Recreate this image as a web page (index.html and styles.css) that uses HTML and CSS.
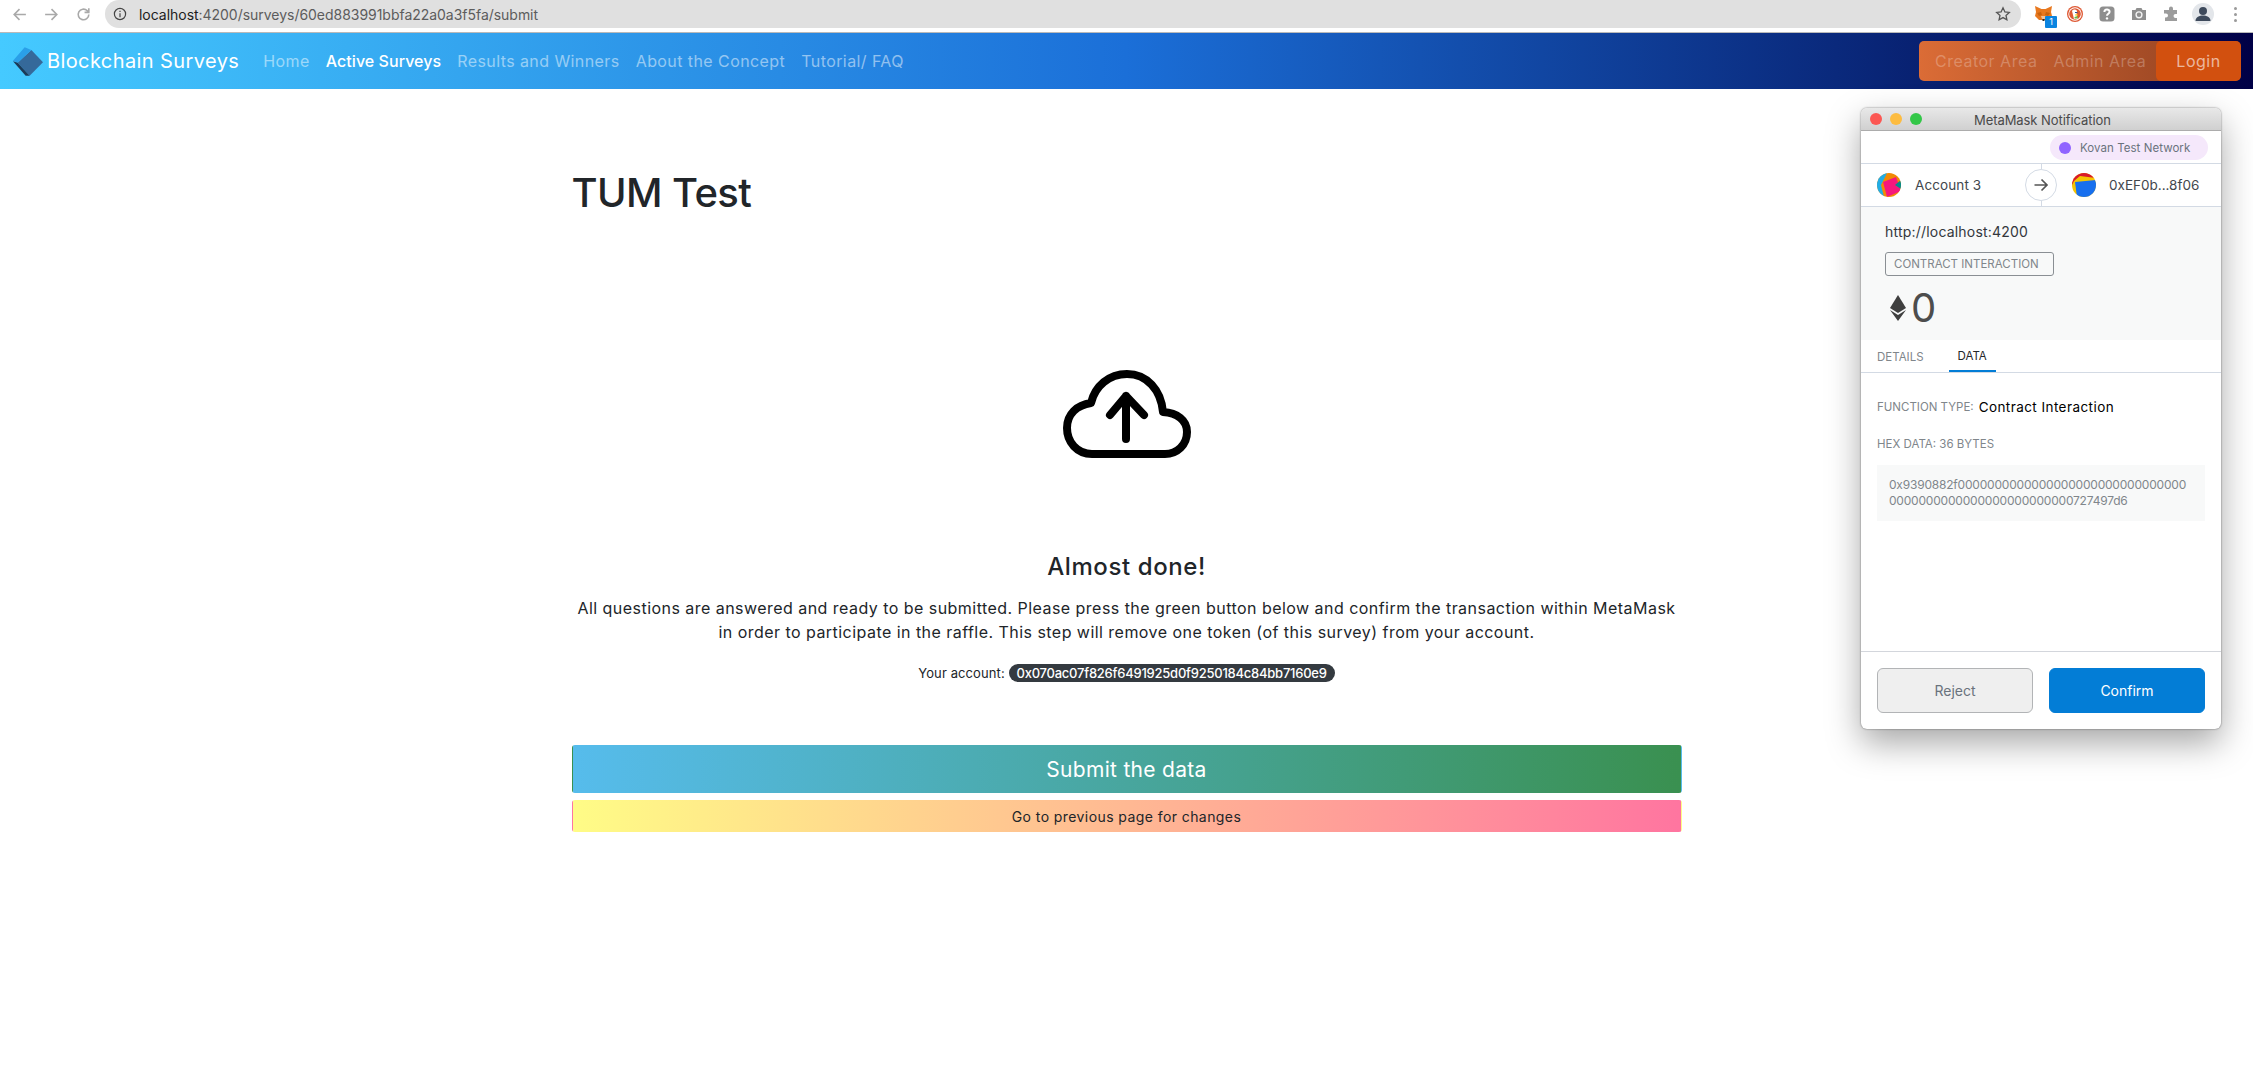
FILE: index.html
```html
<!DOCTYPE html>
<html lang="en">
<head>
<meta charset="UTF-8">
<title>Blockchain Surveys</title>
<link rel="stylesheet" href="styles.css">
</head>
<body>

<div class="browser">
  <div class="browser-nav">
    <svg class="b-ico" viewBox="0 0 16 16"><path d="M14 8H3M8 3 3 8l5 5"/></svg>
    <svg class="b-ico" viewBox="0 0 16 16"><path d="M2 8h11M8 3l5 5-5 5"/></svg>
    <svg class="b-ico" viewBox="0 0 16 16"><path d="M13 8a5 5 0 1 1-1.6-3.7L13 6M13 2v4H9"/></svg>
  </div>
  <div class="address">
    <svg class="info" viewBox="0 0 14 14"><circle cx="7" cy="7" r="5.6"/><path d="M7 6.2v4M7 3.8v1.2"/></svg>
    <span class="url"><b>localhost</b>:4200/surveys/60ed883991bbfa22a0a3f5fa/submit</span>
    <svg class="star" viewBox="0 0 16 16"><path d="M8 1.8l1.9 4.1 4.4.5-3.3 3 .9 4.4L8 11.6l-3.9 2.2.9-4.4-3.3-3 4.4-.5z"/></svg>
  </div>
  <div class="ext">
    <span class="fox-wrap">
      <svg class="fox" viewBox="0 0 17 15"><path fill="#e8781f" d="M0 0l6.500 3h4L17 0l-1 6 1 4-4 4H4l-4-4 1-4z"/><path fill="#c9620f" d="M2 7l4-1 1 3-3 1zM15 7l-4-1-1 3 3 1z"/><path fill="#f4c39a" d="M6 10h5l-1 3H7z"/><path fill="#2b2b2b" d="M7.500 13h2v2h-2z"/></svg>
      <span class="fox-badge">1</span>
    </span>
    <svg class="ext-ico" viewBox="0 0 16 16"><circle cx="8" cy="8" r="8" fill="#de5833"/><circle cx="8" cy="8" r="6.700" fill="#fff"/><circle cx="8" cy="8" r="5.800" fill="#de5833"/><path fill="#fff" d="M5 5c1-2 4-2 5 0l-.5 3 1 5H7z"/><path fill="#2d4f8e" d="M8 6h2.500v1H8z"/><path fill="#fdd20a" d="M8 8.500h3v1H8z"/><path fill="#65bc46" d="M7.500 11l3-1v2.500h-3z"/></svg>
    <svg class="ext-ico" viewBox="0 0 16 16"><rect x="0.5" y="0.5" width="15" height="15" rx="3.5" fill="#8f8f8f"/><path d="M5.400 6c0-3.200 5.200-3.200 5.200-.2 0 2-2.600 2-2.600 4" fill="none" stroke="#fff" stroke-width="2"/><circle cx="8" cy="12.400" r="1.200" fill="#fff"/></svg>
    <svg class="ext-ico" viewBox="0 0 16 16"><path fill="#8f8f8f" d="M1 4h3.500l1-2h5l1 2H15v10H1z"/><circle cx="8" cy="8.800" r="3.600" fill="#f4f4f4"/><circle cx="8" cy="8.800" r="2.200" fill="#8f8f8f"/></svg>
    <svg class="ext-ico" viewBox="0 0 16 16"><path fill="#9c9c9c" d="M6 2.500a2 2 0 0 1 4 0V4h4v4h-1.500a2 2 0 0 0 0 4H14v3H2v-3.500h1a2 2 0 0 0 0-4H1V4h5z"/></svg>
    <span class="avatar"><svg viewBox="0 0 22 22"><circle cx="11" cy="8" r="4" fill="#3e4a5c"/><path d="M3.500 18c0-4 4-5.500 7.500-5.500s7.500 1.500 7.500 5.500z" fill="#3e4a5c"/></svg></span>
    <span class="kebab"><i></i><i></i><i></i></span>
  </div>
</div>

<nav class="navbar">
  <a class="brand" href="#">
    <svg class="logo" viewBox="0 0 90 85"><path fill="#35699a" d="M55 8 90 45 50 85 14 46z"/><path fill="#2a9fe8" d="M0 40 35 0l20 8-41 38z"/><path fill="#1c3a58" d="M0 42l14 4 36 39H38z"/></svg>
    Blockchain Surveys
  </a>
  <ul class="nav-links">
    <li><a href="#">Home</a></li>
    <li class="active"><a href="#">Active Surveys</a></li>
    <li><a href="#">Results and Winners</a></li>
    <li><a href="#">About the Concept</a></li>
    <li><a href="#">Tutorial/ FAQ</a></li>
  </ul>
  <div class="user-area">
    <a href="#">Creator Area</a>
    <a href="#">Admin Area</a>
    <a class="login" href="#">Login</a>
  </div>
</nav>

<main class="container">
  <h1>TUM Test</h1>
  <svg class="cloud" viewBox="0 0 128 88"><path d="M29 84C14 84 4 72 4 58c0-14 10-23 24-25C32 16 46 4 64 4c20 0 34 16 36 38 14 1 24 8 24 20 0 13-10 22-22 22z"/><path d="M63 69V26M47 45l16-19 18 19"/></svg>
  <h2>Almost done!</h2>
  <p class="lead">All questions are answered and ready to be submitted. Please press the green button below and confirm the transaction within MetaMask<br>in order to participate in the raffle. This step will remove one token (of this survey) from your account.</p>
  <p class="account">Your account: <span class="pill">0x070ac07f826f6491925d0f9250184c84bb7160e9</span></p>
  <button class="btn-submit">Submit the data</button>
  <button class="btn-back">Go to previous page for changes</button>
</main>

<section class="mm-window">
  <header class="mm-title">
    <span class="dot red"></span><span class="dot yellow"></span><span class="dot green"></span>
    <span class="mm-title-text">MetaMask Notification</span>
  </header>
  <div class="mm-network">
    <span class="net-pill"><i></i>Kovan Test Network</span>
  </div>
  <div class="mm-accounts">
    <svg class="identicon" viewBox="0 0 24 24"><defs><clipPath id="c1"><circle cx="12" cy="12" r="12"/></clipPath></defs><g clip-path="url(#c1)"><rect width="24" height="24" fill="#f18a05"/><path fill="#22ade5" d="M0 0h10L4 12l3 12H0z"/><path fill="#f5187d" d="M6 9 19 4l5 14-14 6z"/><path fill="#038c8c" d="M18 12l6-5v9z"/></g></svg>
    <span class="acc-name">Account 3</span>
    <span class="arrow-wrap"><svg viewBox="0 0 16 16"><path d="M1.500 8h12M8.500 2.500 14 8l-5.500 5.500"/></svg></span>
    <svg class="identicon second" viewBox="0 0 24 24"><defs><clipPath id="c2"><circle cx="12" cy="12" r="12"/></clipPath></defs><g clip-path="url(#c2)"><rect width="24" height="24" fill="#f5c402"/><path fill="#d81a2b" d="M0 0h24v5L8 3 2 8 0 12z"/><path fill="#176fee" d="M3 9 24 7v17H5z"/></g></svg>
    <span class="acc-name addr">0xEF0b...8f06</span>
  </div>
  <div class="mm-summary">
    <div class="origin">http://localhost:4200</div>
    <span class="action-tag">CONTRACT INTERACTION</span>
    <div class="amount">
      <svg viewBox="0 0 16 26"><path fill="#3f3f3f" d="M8 0 16 13 8 18 0 13z"/><path fill="#3f3f3f" d="M0 15l8 5 8-5-8 11z"/></svg>
      <span>0</span>
    </div>
  </div>
  <div class="mm-tabs">
    <span class="tab">DETAILS</span>
    <span class="tab selected">DATA</span>
  </div>
  <div class="mm-data">
    <div class="fn-row"><span class="label">FUNCTION TYPE:</span><span class="fn-value">Contract Interaction</span></div>
    <div class="label hex-label">HEX DATA: 36 BYTES</div>
    <div class="hex-box">0x9390882f0000000000000000000000000000000<br>0000000000000000000000000727497d6</div>
  </div>
  <footer class="mm-footer">
    <button class="mm-btn reject">Reject</button>
    <button class="mm-btn confirm">Confirm</button>
  </footer>
</section>

</body>
</html>
```

FILE: styles.css
```css
*{box-sizing:border-box}
html,body{height:100%}
body{margin:0;font-family:Inter,"Noto Sans",sans-serif;background:#fff;color:#212529;overflow:hidden;position:relative}
a{text-decoration:none;color:inherit}

/* browser chrome */
.browser{height:33px;display:flex;align-items:flex-start;background:#fff;border-bottom:1px solid #b9b9b9}
.browser-nav{width:105px;height:28px;padding-left:11px;display:flex;align-items:center;gap:15px;flex:none}
.b-ico{width:17px;height:17px;fill:none;stroke:#a9a9a9;stroke-width:1.5}
.address{width:1916px;height:28px;flex:none;background:#e0e0e0;border-radius:14px;display:flex;align-items:center;padding:0 10px 0 8px;font-size:14px;color:#5c5c5c}
.address b{font-weight:400;color:#1d1d1d}
.info{width:14px;height:14px;fill:none;stroke:#444;stroke-width:1.200;margin-right:12px;flex:none}
.url{flex:1;letter-spacing:-.03px}
.star{width:16px;height:16px;fill:none;stroke:#555;stroke-width:1.300}
.ext{flex:1;height:28px;display:flex;align-items:center;padding-left:14px;gap:16px}
.fox-wrap{position:relative;width:16px;height:16px;flex:none}
.fox{width:17px;height:15px;display:block}
.fox-badge{position:absolute;left:10px;top:10px;width:12px;height:12px;background:#0a84e0;color:#fff;font-size:9px;line-height:12px;text-align:center;border-radius:1px}
.ext-ico{width:16px;height:16px;flex:none}
.avatar{width:22px;height:22px;border-radius:50%;background:#e3e6ea;flex:none;margin-left:-3px}
.avatar svg{display:block;width:22px;height:22px}
.kebab{display:flex;flex-direction:column;gap:3px;margin-left:4px}
.kebab i{width:3px;height:3px;border-radius:50%;background:#9a9a9a}

/* app navbar */
.navbar{height:56px;display:flex;align-items:center;padding:0 12px 0 13px;background:linear-gradient(90deg,#45caff 0%,#1b6fd8 50%,#000046 100%)}
.brand{display:flex;align-items:center;gap:4px;font-size:20px;color:#fff;letter-spacing:.4px}
.logo{width:30px;height:29px;flex:none}
.nav-links{display:flex;gap:16px;list-style:none;margin:0 0 0 24px;padding:0;font-size:16px;letter-spacing:.42px;color:rgba(255,255,255,.5)}
.nav-links .active{color:#fff;font-weight:500;letter-spacing:.05px}
.user-area{margin-left:auto;height:40px;width:322px;display:flex;align-items:center;border-radius:5px;font-size:16px;letter-spacing:.5px;color:rgba(255,255,255,.26);background:linear-gradient(90deg,#db6c36,#8e3f20);overflow:hidden}
.user-area a{padding:0 8px}
.user-area a:first-child{padding-left:16px}
.user-area .login{margin-left:auto;height:40px;width:85px;display:flex;align-items:center;justify-content:center;background:#d2500f;color:rgba(255,255,255,.6);border-radius:5px}

/* page body */
.container{width:1110px;margin:0 auto;display:flex;flex-direction:column;align-items:center;text-align:center}
h1{align-self:flex-start;margin:80px 0 0;font-size:40px;line-height:48px;font-weight:500;letter-spacing:-.6px}
.cloud{display:block;width:128px;height:88px;margin-top:153px;fill:none;stroke:#000;stroke-width:8;stroke-linecap:round;stroke-linejoin:round}
h2{margin:94px 0 0;font-size:24px;line-height:29px;font-weight:500;letter-spacing:.6px}
.lead{margin:15px 0 0;font-size:16px;line-height:24px;letter-spacing:.46px;color:#212529}
.account{margin:20px 0 0;font-size:13px;line-height:18px;letter-spacing:.1px}
.pill{display:inline-block;padding:0 8px;border-radius:9px;background:#343a40;color:#fff;font-weight:500;letter-spacing:-.24px}
.btn-submit,.btn-back{display:block;width:100%;border:1px solid transparent;font-family:inherit;border-radius:3px}
.btn-submit{margin-top:63px;height:48px;font-size:21px;letter-spacing:.3px;color:#fff;background:linear-gradient(90deg,#56bcec,#3a9050)}
.btn-back{margin-top:7px;height:32px;font-size:14px;letter-spacing:.42px;color:#212529;background:linear-gradient(90deg,#fffc86,#ff75a0)}

/* floating metamask popup */
.mm-window{position:absolute;left:1861px;top:108px;width:360px;height:621px;background:#fff;border-radius:6px;display:flex;flex-direction:column;overflow:hidden;box-shadow:0 0 2px rgba(0,0,0,.55),0 14px 34px rgba(0,0,0,.35);color:#24272a}
.mm-title{height:23px;flex:none;display:flex;align-items:center;gap:8px;padding-left:9px;position:relative;background:linear-gradient(#e8e8e8,#d0d0d0);border-bottom:1px solid #acacac}
.dot{width:12px;height:12px;border-radius:50%}
.red{background:#fc5753}
.yellow{background:#fdbc40}
.green{background:#33c748}
.mm-title-text{position:absolute;left:113px;top:4px;font-size:13px;line-height:16px;color:#4a4a4a;letter-spacing:-.07px}
.mm-network{height:33px;flex:none;display:flex;align-items:center;justify-content:flex-end;padding:1px 13px 0 0;border-bottom:1px solid #d3dae4}
.net-pill{height:25px;width:158px;display:flex;align-items:center;gap:9px;padding-left:9px;border-radius:13px;background:#f5e8fb;font-size:11.500px;color:#6a737d;letter-spacing:.05px}
.net-pill i{width:12px;height:12px;border-radius:50%;background:#9064ff}
.mm-accounts{height:43px;flex:none;display:flex;align-items:center;padding-left:16px;border-bottom:1px solid #d3dae4}
.identicon{width:24px;height:24px;flex:none}
.identicon.second{margin-left:15px}
.acc-name{margin-left:14px;font-size:13.500px;letter-spacing:.1px;color:#42474d;width:110px}
.acc-name.addr{width:auto;letter-spacing:0;margin-left:13px}
.arrow-wrap{width:32px;height:32px;flex:none;border-radius:50%;border:1px solid #d3dae4;background:#fff;display:flex;align-items:center;justify-content:center;position:relative}
.arrow-wrap::before,.arrow-wrap::after{content:"";position:absolute;left:14.500px;width:1px;height:5px;background:#d3dae4}
.arrow-wrap::before{top:-6px}
.arrow-wrap::after{bottom:-6px}
.arrow-wrap svg{width:16px;height:16px;fill:none;stroke:#555;stroke-width:1.700}
.mm-summary{height:133px;flex:none;background:#f8f9f9;padding:15px 0 0 24px}
.origin{font-size:14px;line-height:20px;letter-spacing:.2px;color:#33373c}
.action-tag{display:inline-block;margin-top:10px;height:24px;line-height:22px;padding:0 8px;width:169px;border:1px solid #8a8f94;border-radius:3px;font-size:11.500px;color:#80868b;white-space:nowrap}
.amount{margin:7px 0 0 5px;display:flex;align-items:center;gap:5px;font-size:40px;line-height:50px;color:#4d4d4d;font-weight:400}
.amount svg{width:16px;height:26px;flex:none}
.mm-tabs{height:33px;flex:none;display:flex;border-bottom:1px solid #d3dae4;font-size:11.500px;color:#80868b;padding-left:16px}
.tab{display:flex;align-items:center;height:33px}
.tab.selected{margin-left:25px;padding:2px 9px 0;color:#24272a;border-bottom:2px solid #037dd6;height:32px}
.mm-data{flex:1;padding:24px 16px 0}
.fn-row{display:flex;align-items:center;gap:5px;height:20px}
.label{font-size:11.500px;color:#80868b}
.fn-value{font-size:13.500px;letter-spacing:.43px;color:#000}
.hex-label{margin-top:19px;line-height:16px}
.hex-box{margin-top:13px;height:56px;padding:12px;background:#f8f9f9;font-size:12px;line-height:16px;color:#80868b;letter-spacing:-.2px;white-space:nowrap}
.mm-footer{height:78px;flex:none;border-top:1px solid #d3d6dc;display:flex;gap:16px;padding:16px 16px 0}
.mm-btn{width:156px;height:45px;border-radius:6px;font-family:inherit;font-size:14px}
.reject{background:#efefef;border:1px solid #b2b4b6;color:#6a737d}
.confirm{background:#037dd6;border:1px solid #037dd6;color:#fff}
```
